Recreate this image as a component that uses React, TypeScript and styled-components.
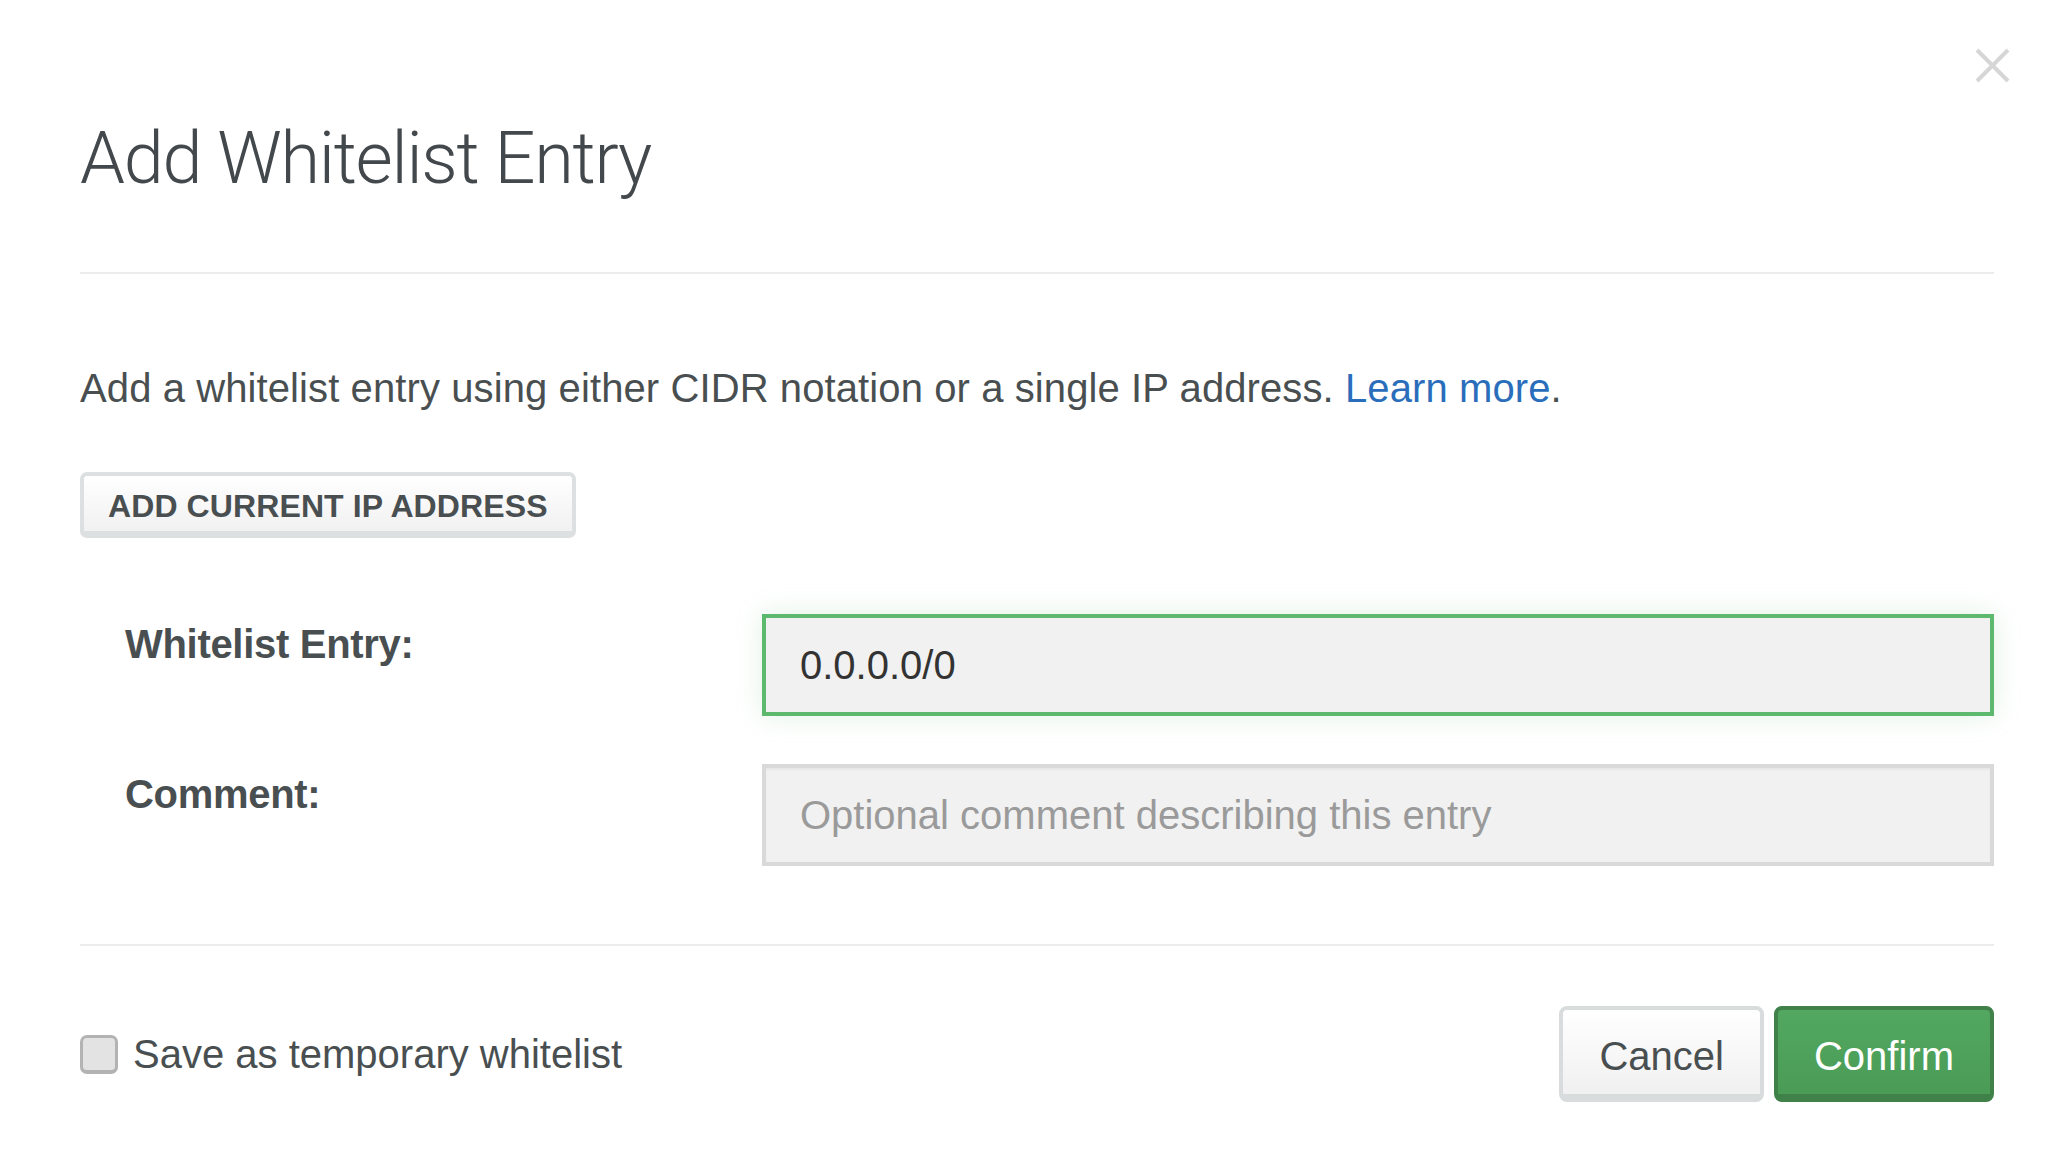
import React from "react";
import styled, { createGlobalStyle, css } from "styled-components";

const GlobalStyle = createGlobalStyle`
  html, body {
    margin: 0;
    padding: 0;
    background: #fff;
  }
  body {
    font-family: "Liberation Sans", Arial, sans-serif;
    color: #494f51;
  }
  * {
    box-sizing: border-box;
  }
`;

const App = () => {
  return (
    <>
      <GlobalStyle />
      <Modal>
        <Header>
          <CloseRow>
            <CloseButton aria-label="Close">
              <svg width="35" height="35" viewBox="0 0 35 35">
                <path d="M2 2 L33 33 M33 2 L2 33" stroke="#d6d6d6" strokeWidth="4" fill="none" />
              </svg>
            </CloseButton>
          </CloseRow>
          <Title>Add Whitelist Entry</Title>
        </Header>

        <Body>
          <Description>
            Add a whitelist entry using either CIDR notation or a single IP address.{" "}
            <LearnMore href="#">Learn more</LearnMore>.
          </Description>

          <AddIpButton type="button">Add Current IP Address</AddIpButton>

          <FormGrid>
            <Label htmlFor="entry">Whitelist Entry:</Label>
            <TextInput id="entry" $focused defaultValue="0.0.0.0/0" />

            <Label htmlFor="comment">Comment:</Label>
            <TextInput id="comment" placeholder="Optional comment describing this entry" />
          </FormGrid>
        </Body>

        <Footer>
          <CheckLabel>
            <Checkbox type="checkbox" />
            Save as temporary whitelist
          </CheckLabel>
          <Actions>
            <ActionButton type="button">Cancel</ActionButton>
            <ActionButton type="button" $primary>Confirm</ActionButton>
          </Actions>
        </Footer>
      </Modal>
    </>
  );
};

export default App;

const Modal = styled.div`
  display: flex;
  flex-direction: column;
  width: 100%;
  min-height: 1162px;
  padding: 0 66px 0 80px;
  background: #fff;
`;

const Header = styled.div`
  padding-top: 48px;
  padding-bottom: 70px;
  border-bottom: 2px solid #ececec;
`;

const CloseRow = styled.div`
  display: flex;
  justify-content: flex-end;
  height: 34px;
`;

const CloseButton = styled.button`
  display: flex;
  align-items: center;
  justify-content: center;
  width: 35px;
  height: 35px;
  margin-right: -16px;
  padding: 0;
  border: none;
  background: none;
  cursor: pointer;
`;

const Title = styled.h1`
  margin: 34px 0 0;
  font-family: Roboto, "Liberation Sans", sans-serif;
  font-weight: 300;
  font-size: 72px;
  line-height: 86px;
  letter-spacing: -1.3px;
  color: #42484b;
`;

const Body = styled.div`
  display: flex;
  flex-direction: column;
  align-items: flex-start;
  padding-top: 90px;
  padding-bottom: 78px;
  border-bottom: 2px solid #ececec;
`;

const Description = styled.p`
  margin: 0;
  font-size: 40px;
  line-height: 48px;
  letter-spacing: 0.1px;
  color: #494f51;
`;

const LearnMore = styled.a`
  color: #2a6ebb;
  text-decoration: none;
`;

const AddIpButton = styled.button`
  margin-top: 60px;
  padding: 6px 24px 0;
  height: 66px;
  border: 4px solid #dde0e1;
  border-bottom-width: 7px;
  border-radius: 7px;
  background: linear-gradient(#ffffff, #f1f1f1);
  font-family: "Liberation Sans", Arial, sans-serif;
  font-weight: 700;
  font-size: 32px;
  line-height: 49px;
  letter-spacing: 0.1px;
  text-transform: uppercase;
  color: #494f51;
  cursor: pointer;
`;

const FormGrid = styled.div`
  display: grid;
  grid-template-columns: 682px 1fr;
  row-gap: 48px;
  width: 100%;
  margin-top: 76px;
`;

const Label = styled.label`
  padding: 6px 0 0 45px;
  font-weight: 700;
  font-size: 40px;
  line-height: 48px;
  letter-spacing: -0.3px;
  color: #494f51;
`;

const TextInput = styled.input<{ $focused?: boolean }>`
  width: 100%;
  height: 102px;
  padding: 0 34px;
  border: 4px solid #d9d9d9;
  border-radius: 0;
  background: #f1f1f1;
  box-shadow: inset 0 2px 2px rgba(0, 0, 0, 0.04);
  font-family: "Liberation Sans", Arial, sans-serif;
  font-size: 40px;
  color: #333;
  outline: none;

  &::placeholder {
    color: #9a9a9a;
  }

  ${(p) =>
    p.$focused &&
    css`
      border-color: #5cb96d;
      box-shadow: 0 0 26px rgba(92, 185, 109, 0.18);
    `}
`;

const Footer = styled.div`
  display: flex;
  align-items: center;
  justify-content: space-between;
  padding-top: 60px;
`;

const CheckLabel = styled.label`
  display: flex;
  align-items: center;
  gap: 15px;
  font-size: 40px;
  line-height: 48px;
  color: #494f51;
`;

const Checkbox = styled.input`
  appearance: none;
  width: 38px;
  height: 39px;
  margin: 0;
  border: 3px solid #b3b3b3;
  border-bottom-width: 4px;
  border-radius: 7px;
  background: #e3e3e3;
`;

const Actions = styled.div`
  display: flex;
  gap: 10px;
`;

const ActionButton = styled.button<{ $primary?: boolean }>`
  height: 96px;
  padding: 8px 36px 0;
  border: 4px solid #d9dcdd;
  border-bottom-width: 8px;
  border-radius: 8px;
  background: linear-gradient(#ffffff, #f0f0f0);
  font-family: "Liberation Sans", Arial, sans-serif;
  font-size: 40px;
  line-height: 76px;
  color: #494f51;
  cursor: pointer;

  ${(p) =>
    p.$primary &&
    css`
      border-color: #3f8149;
      background: linear-gradient(#52a860, #4a9b56);
      color: #fff;
    `}
`;
